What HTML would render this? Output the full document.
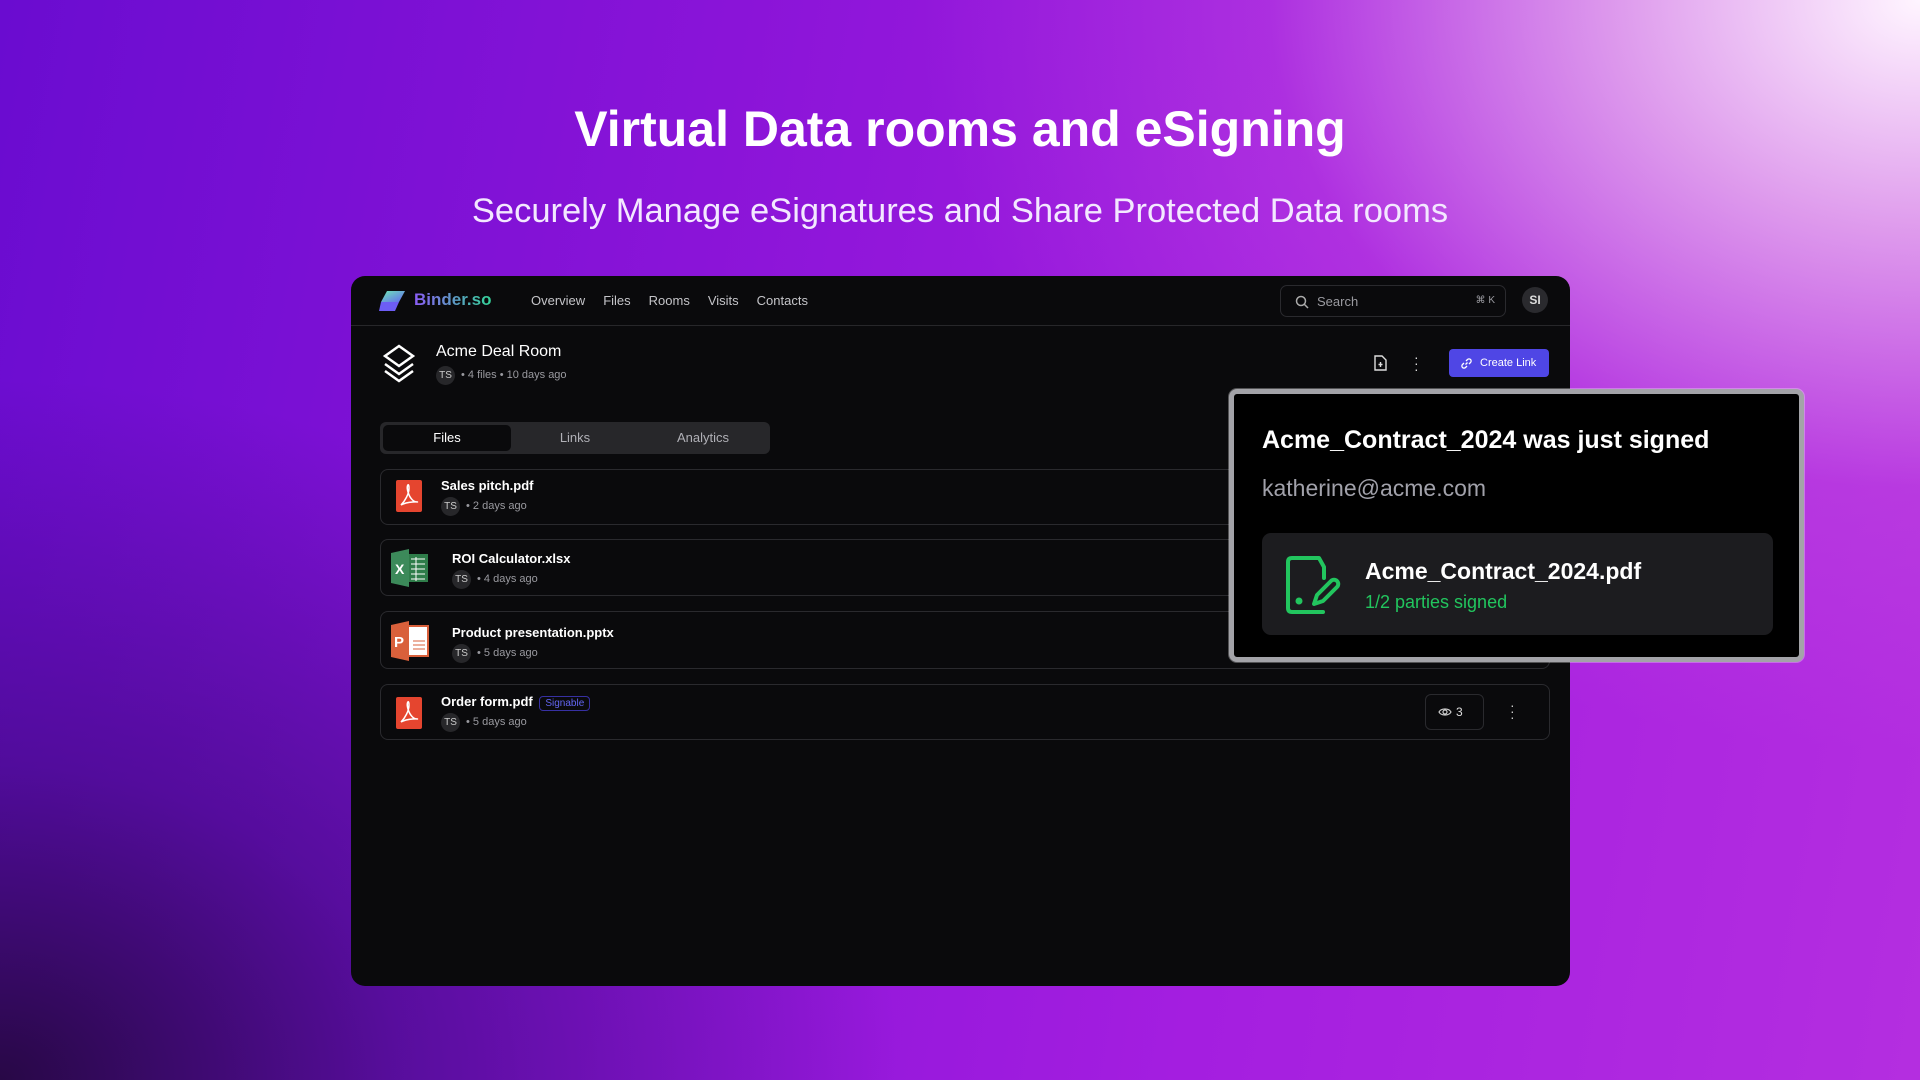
<!DOCTYPE html>
<html><head><meta charset="utf-8"><style>
*{margin:0;padding:0;box-sizing:border-box}
body{width:1920px;height:1080px;overflow:hidden;font-family:"Liberation Sans",sans-serif;position:relative;
background:
radial-gradient(ellipse 1000px 750px at 1920px 0px,rgba(255,245,255,1) 0%,rgba(235,185,240,.8) 30%,rgba(200,90,225,.3) 65%,rgba(200,80,220,0) 100%),
radial-gradient(ellipse 900px 700px at 0px 1080px,rgba(40,8,70,1) 0%,rgba(60,10,120,.6) 45%,rgba(80,10,180,0) 100%),
linear-gradient(100deg,#6a0cd0 0%,#8a14d8 35%,#a41ee0 65%,#b42ee0 100%);}
.h1{position:absolute;top:100px;width:100%;text-align:center;color:#fff;font-weight:bold;font-size:50px}
.h2{position:absolute;top:192px;width:100%;text-align:center;color:#f3e8ff;font-size:34.5px}
.win{position:absolute;left:351px;top:276px;width:1219px;height:710px;background:#0a0a0c;border-radius:14px;overflow:hidden}
.nav{height:50px;border-bottom:1px solid #27272a;position:relative}
.nav .logo{position:absolute;left:28px;top:14px}
.nav .brand{position:absolute;left:63px;top:14px;font-size:17px;font-weight:bold;background:linear-gradient(90deg,#8b5cf6,#34d399);-webkit-background-clip:text;color:transparent}
.links{position:absolute;left:180px;top:17px;font-size:13px;color:#c4c4c8}
.links span{margin-right:18px}
.search{position:absolute;left:929px;top:9px;width:226px;height:32px;border:1px solid #2a2a2e;border-radius:7px;color:#9a9aa0;font-size:13px;padding:8px 0 0 36px}
.search .k{position:absolute;right:10px;top:9px;font-size:10px}
.av{position:absolute;background:#2a2a2e;border-radius:50%;color:#ddd;text-align:center}
.t{color:#fff}
.meta{font-size:11px;color:#9a9aa0}
.ts{display:inline-block;width:19px;height:19px;border-radius:50%;background:#27272a;color:#ccc;font-size:10px;text-align:center;line-height:19px;margin-right:6px}
.row{position:absolute;left:29px;width:1170px;border:1px solid #2a2a2e;border-radius:8px}
.row .nm{position:absolute;font-size:13px;color:#fff;font-weight:bold}
.row .sub{position:absolute;font-size:11px;color:#9a9aa0}
.tabs{position:absolute;left:29px;top:146px;width:390px;height:32px;background:#27272a;border-radius:6px;font-size:13px;color:#b0b0b6}
.tabs div{position:absolute;top:3px;height:26px;width:128px;text-align:center;line-height:26px}
.pop{position:absolute;left:1229px;top:389px;width:575px;height:273px;background:#000;border:5px solid #a3a3a8;border-radius:8px;box-shadow:0 0 0 1px rgba(255,255,255,.3)}
</style></head><body>
<div class="h1">Virtual Data rooms and eSigning</div>
<div class="h2">Securely Manage eSignatures and Share Protected Data rooms</div>
<div class="win">
 <div class="nav">
  <svg class="logo" width="28" height="22" viewBox="0 0 28 22"><defs><linearGradient id="lg" x1="0" y1="0" x2="1" y2="1"><stop offset="0" stop-color="#6ee7b7"/><stop offset="1" stop-color="#6366f1"/></linearGradient></defs><path d="M8 1h18l-6 11H2z" fill="url(#lg)"/><path d="M2 12h18l-4 9H0z" fill="#6d5df5"/></svg>
  <div class="brand">Binder.so</div>
  <div class="links"><span>Overview</span><span>Files</span><span>Rooms</span><span>Visits</span><span>Contacts</span></div>
  <div class="search"><svg style="position:absolute;left:14px;top:9px" width="14" height="14" viewBox="0 0 14 14" fill="none" stroke="#aaa" stroke-width="1.5"><circle cx="6" cy="6" r="4.5"/><path d="M9.5 9.5L13 13"/></svg>Search<span class="k">⌘ K</span></div>
  <div class="av" style="left:1171px;top:11px;width:26px;height:26px;line-height:26px;font-size:12px;font-weight:bold">SI</div>
 </div>
 <svg style="position:absolute;left:30px;top:68px" width="36" height="40" viewBox="0 0 36 40" fill="none" stroke="#fff" stroke-width="2.5"><path d="M18 2L32 12L18 22L4 12z"/><path d="M4 20L18 30L32 20"/><path d="M4 27L18 37L32 27"/></svg>
 <div class="t" style="position:absolute;left:85px;top:67px;font-size:16px">Acme Deal Room</div>
 <div class="meta" style="position:absolute;left:85px;top:90px"><span class="ts">TS</span>• 4 files • 10 days ago</div>
 <svg style="position:absolute;left:1023px;top:79px" width="13" height="16" viewBox="0 0 13 16" fill="none" stroke="#ddd" stroke-width="1.4"><path d="M1 1h7l4 4v10H1z"/><path d="M6.5 7v5M4.5 9.5h4"/></svg>
 <div style="position:absolute;left:1063px;top:78px;color:#ddd;font-size:14px;line-height:6px">·<br>·<br>·</div>
 <div style="position:absolute;left:1098px;top:73px;width:100px;height:28px;background:#4f46e5;border-radius:4px;color:#fff;font-size:11px;line-height:28px;padding-left:31px">Create Link</div>
 <svg style="position:absolute;left:1109px;top:81px" width="13" height="13" viewBox="0 0 13 13" fill="none" stroke="#fff" stroke-width="1.3"><path d="M5.5 7.5l2-2M4 6L2.5 7.5a2 2 0 003 3L7 9M9 7l1.5-1.5a2 2 0 00-3-3L6 4"/></svg>
 <div class="tabs"><div style="left:3px;background:#0a0a0c;border-radius:5px;color:#fff">Files</div><div style="left:131px">Links</div><div style="left:259px">Analytics</div></div>

 <div class="row" style="top:193px;height:56px">
  <svg style="position:absolute;left:15px;top:10px" width="26" height="32" viewBox="0 0 26 32"><rect width="26" height="32" rx="2" fill="#e5452f"/><path d="M5 25c4-4 8-11 8-17s-3-3-1 4 6 10 9 10-9-1-16 3z" fill="none" stroke="#fff" stroke-width="1.5"/></svg>
  <div class="nm" style="left:60px;top:8px">Sales pitch.pdf</div>
  <div class="sub" style="left:60px;top:27px"><span class="ts">TS</span>• 2 days ago</div>
 </div>
 <div class="row" style="top:263px;height:57px">
  <svg style="position:absolute;left:10px;top:9px" width="38" height="38" viewBox="0 0 38 38"><rect x="14" y="5" width="23" height="28" fill="#2f7d4a"/><g stroke="#fff" stroke-width="1"><path d="M20 10h14M20 15h14M20 20h14M20 25h14M20 30h14M25 8v24"/></g><path d="M0 4L18 0V38L0 34z" fill="#3c8a5a"/><text x="4" y="25" font-size="14" font-weight="bold" fill="#fff" font-family="Liberation Sans">X</text></svg>
  <div class="nm" style="left:71px;top:11px">ROI Calculator.xlsx</div>
  <div class="sub" style="left:71px;top:30px"><span class="ts">TS</span>• 4 days ago</div>
 </div>
 <div class="row" style="top:335px;height:58px">
  <svg style="position:absolute;left:10px;top:9px" width="38" height="40" viewBox="0 0 38 40"><rect x="14" y="5" width="23" height="30" fill="#fff"/><rect x="14" y="5" width="23" height="30" fill="none" stroke="#d9603b" stroke-width="2"/><path d="M22 20h12M22 24h12M22 28h12" stroke="#d9603b"/><path d="M0 4L18 0V40L0 36z" fill="#d9603b"/><text x="3" y="26" font-size="15" font-weight="bold" fill="#fff" font-family="Liberation Sans">P</text></svg>
  <div class="nm" style="left:71px;top:13px">Product presentation.pptx</div>
  <div class="sub" style="left:71px;top:32px"><span class="ts">TS</span>• 5 days ago</div>
 </div>
 <div class="row" style="top:408px;height:56px">
  <svg style="position:absolute;left:15px;top:12px" width="26" height="32" viewBox="0 0 26 32"><rect width="26" height="32" rx="2" fill="#e5452f"/><path d="M5 25c4-4 8-11 8-17s-3-3-1 4 6 10 9 10-9-1-16 3z" fill="none" stroke="#fff" stroke-width="1.5"/></svg>
  <div class="nm" style="left:60px;top:9px">Order form.pdf <span style="font-weight:normal;font-size:10px;color:#6366f1;border:1px solid #3730a3;border-radius:4px;padding:1px 5px;margin-left:3px">Signable</span></div>
  <div class="sub" style="left:60px;top:28px"><span class="ts">TS</span>• 5 days ago</div>
  <div style="position:absolute;left:1044px;top:9px;width:59px;height:36px;border:1px solid #2a2a2e;border-radius:6px;color:#ddd;font-size:12px;line-height:34px;padding-left:30px">3</div>
  <svg style="position:absolute;left:1057px;top:22px" width="14" height="10" viewBox="0 0 14 10" fill="none" stroke="#ccc" stroke-width="1.2"><path d="M1 5C3 1 11 1 13 5C11 9 3 9 1 5z"/><circle cx="7" cy="5" r="2"/></svg>
  <div style="position:absolute;left:1129px;top:17px;color:#ccc;font-size:14px;line-height:6px">·<br>·<br>·</div>
 </div>
</div>
<div class="pop">
 <div style="position:absolute;left:28px;top:32px;color:#fff;font-size:25px;font-weight:bold">Acme_Contract_2024 was just signed</div>
 <div style="position:absolute;left:28px;top:81px;color:#a1a1aa;font-size:23px">katherine@acme.com</div>
 <div style="position:absolute;left:28px;top:139px;width:511px;height:102px;background:#1c1c1f;border-radius:9px">
  <svg style="position:absolute;left:24px;top:23px" width="56" height="58" viewBox="0 0 56 58" fill="none" stroke="#22c55e" stroke-width="4" stroke-linecap="round" stroke-linejoin="round"><path d="M38 22V11L33 2H6Q2 2 2 6V52Q2 56 6 56H37"/><path d="M28 48l3-9 14-14a4 4 0 016 6L37 45z"/><circle cx="13" cy="45" r="1.5" fill="#22c55e"/></svg>
  <div style="position:absolute;left:103px;top:25px;color:#fff;font-size:23px;font-weight:bold">Acme_Contract_2024.pdf</div>
  <div style="position:absolute;left:103px;top:59px;color:#22c55e;font-size:18px">1/2 parties signed</div>
 </div>
</div>
</body></html>
